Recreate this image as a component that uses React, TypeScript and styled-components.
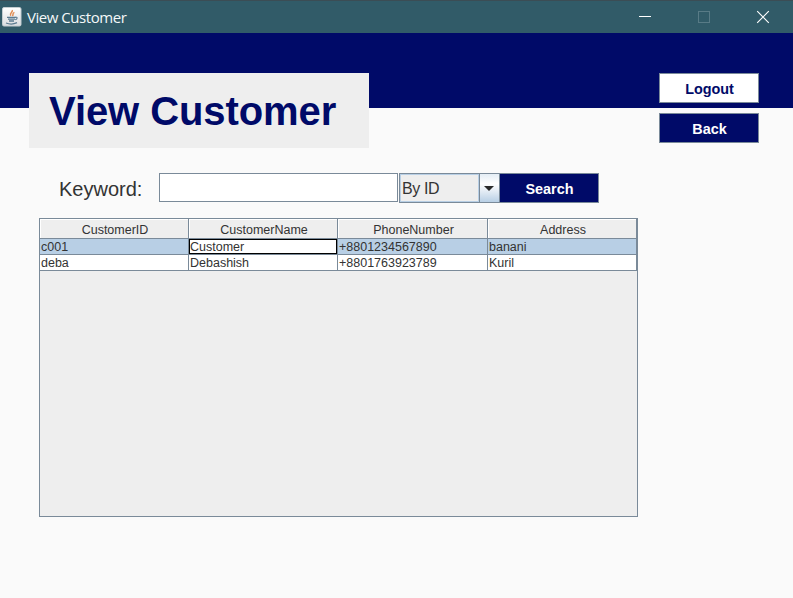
import React from "react";
import styled, { createGlobalStyle, css } from "styled-components";

const navy = "#000a68";
const line = "#7a8a99";

const GlobalStyle = createGlobalStyle`
  * { box-sizing: border-box; }
  body { margin: 0; background: #fafafa; overflow: hidden; }
`;

const Window = styled.div`
  width: 793px;
  height: 598px;
  display: flex;
  flex-direction: column;
  font-family: "Liberation Sans", Arial, sans-serif;
  color: #333;
`;

const TitleBar = styled.header`
  height: 33px;
  flex: none;
  display: flex;
  align-items: center;
  padding: 0 23px 1px 2px;
  background: #315b68;
  border-top: 1px solid #3b4d55;
  color: #f4f8f9;
`;

const WindowTitle = styled.span`
  flex: 1;
  margin-left: 5px;
  font: 15px/20px "Open Sans", "Noto Sans", sans-serif;
  letter-spacing: -0.46px;
`;

const WindowControls = styled.div`
  display: flex;
  gap: 45px;
`;

const Content = styled.main`
  flex: 1;
  padding: 40px 34px 0 29px;
  background: linear-gradient(${navy} 75px, #fafafa 75px);
`;

const Top = styled.div`
  display: flex;
  justify-content: space-between;
`;

const Heading = styled.h1`
  width: 340px;
  height: 75px;
  margin: 0;
  padding: 0 0 0 20px;
  background: #eee;
  color: ${navy};
  font-size: 40px;
  letter-spacing: -0.08px;
  line-height: 77px;
`;

const Actions = styled.div`
  display: flex;
  flex-direction: column;
  gap: 10px;
`;

const Button = styled.button<{ $light?: boolean }>`
  width: 100px;
  height: 30px;
  padding: 2px 0 0 1px;
  border: 1px solid ${line};
  background: ${(p) => (p.$light ? "#fff" : navy)};
  color: ${(p) => (p.$light ? navy : "#fff")};
  font: bold 14.4px/16px "Liberation Sans", Arial, sans-serif;
`;

const SearchBar = styled.form`
  display: flex;
  height: 30px;
  margin: 25px 0 0 30px;
`;

const Label = styled.label`
  width: 100px;
  font-size: 20px;
  line-height: 32px;
`;

const KeywordInput = styled.input`
  width: 239px;
  height: 29px;
  margin-right: 1px;
  border: 1px solid ${line};
  border-radius: 0;
  background: #fff;
  outline: 0;
`;

const Combo = styled.div`
  width: 101px;
  height: 30px;
  margin-right: -1px;
  display: flex;
  border: 1px solid ${line};
  background: #eee;
`;

const ComboValue = styled.span`
  flex: 1;
  padding-left: 1px;
  border: 1px solid #b8cfe5;
  font-size: 16px;
  letter-spacing: -0.4px;
  line-height: 27px;
`;

const ComboArrow = styled.span`
  width: 20px;
  display: flex;
  align-items: center;
  justify-content: center;
  padding: 1px 1px 0 0;
  border-left: 1px solid ${line};
  background: linear-gradient(#e4edf5, #fff 35%, #e5edf5 60%, #b8cfe5);
`;

const TablePane = styled.section`
  width: 599px;
  height: 299px;
  margin: 15px 0 0 10px;
  border: 1px solid ${line};
  background: #eee;
`;

const Row = styled.div<{ $header?: boolean; $selected?: boolean }>`
  display: grid;
  grid-template-columns: 149px 149px 150px 149px;
  grid-template-rows: ${(p) => (p.$header ? 20 : 16)}px;
  background: ${(p) => (p.$header ? "#eee" : p.$selected ? "#b8cfe5" : "#fff")};
`;

const HeaderCell = styled.div`
  padding-left: 2px;
  border-right: 1px solid ${line};
  border-bottom: 1px solid ${line};
  box-shadow: inset 1px 1px #fff;
  font-size: 12.5px;
  line-height: 22px;
  text-align: center;
`;

const Cell = styled.div<{ $focused?: boolean }>`
  padding-left: 1px;
  border-right: 1px solid ${line};
  border-bottom: 1px solid ${line};
  font-size: 12.5px;
  line-height: 16px;
  white-space: nowrap;
  ${(p) =>
    p.$focused &&
    css`
      padding: 0 0 0 1px;
      line-height: 17px;
      background: #fff;
      box-shadow: inset 0 0 0 1px #000;
    `}
`;

const columns = ["CustomerID", "CustomerName", "PhoneNumber", "Address"];
const customers = [
  ["c001", "Customer", "+8801234567890", "banani"],
  ["deba", "Debashish", "+8801763923789", "Kuril"],
];

const JavaIcon = () => (
  <svg width="20" height="20" viewBox="0 0 20 20" fill="none">
    <defs>
      <linearGradient id="tile" x2="0" y2="1">
        <stop stopColor="#fff" />
        <stop offset="1" stopColor="#d9dde0" />
      </linearGradient>
    </defs>
    <rect x=".5" y=".5" width="18.5" height="18.5" rx="1.5" fill="url(#tile)" stroke="#c3cdd1" />
    <path d="M10.2 3.2c1.2 2-3.4 2.8-1.4 5.6M12.4 5.4C9.6 6.7 12 7.4 10.4 9" stroke="#e08b50" strokeWidth="1.5" />
    <path d="M5 10.4h8.5M6 12.2h7M7 14h5M4 16c3 1.2 8 1.1 11-.3" stroke="#5b7b90" strokeWidth="1.3" />
    <path d="M13 10.4c3-.9 2.6 1.7.2 2.3" stroke="#5b7b90" strokeWidth="1.1" />
  </svg>
);

export default function App() {
  return (
    <>
      <GlobalStyle />
      <Window>
        <TitleBar>
          <JavaIcon />
          <WindowTitle>View Customer</WindowTitle>
          <WindowControls>
            <svg width="14" height="14" viewBox="0 0 14 14">
              <path d="M1 6.5h12" stroke="#fff" />
            </svg>
            <svg width="14" height="14" viewBox="0 0 14 14">
              <rect x="1.5" y="1.5" width="11" height="11" fill="none" stroke="#587b86" />
            </svg>
            <svg width="14" height="14" viewBox="0 0 14 14">
              <path d="M1.2 1.2l11.6 11.6M12.8 1.2L1.2 12.8" stroke="#fff" strokeWidth="1.15" />
            </svg>
          </WindowControls>
        </TitleBar>
        <Content>
          <Top>
            <Heading>View Customer</Heading>
            <Actions>
              <Button $light>Logout</Button>
              <Button>Back</Button>
            </Actions>
          </Top>
          <SearchBar onSubmit={(e) => e.preventDefault()}>
            <Label htmlFor="keyword">Keyword:</Label>
            <KeywordInput id="keyword" />
            <Combo>
              <ComboValue>By ID</ComboValue>
              <ComboArrow>
                <svg width="10" height="5" viewBox="0 0 10 5">
                  <path d="M0 0h10L5 5z" fill="#2b2b2b" />
                </svg>
              </ComboArrow>
            </Combo>
            <Button>Search</Button>
          </SearchBar>
          <TablePane>
            <Row $header>
              {columns.map((name) => (
                <HeaderCell key={name}>{name}</HeaderCell>
              ))}
            </Row>
            {customers.map((customer, r) => (
              <Row key={customer[0]} $selected={r === 0}>
                {customer.map((value, c) => (
                  <Cell key={value} $focused={r === 0 && c === 1}>
                    {value}
                  </Cell>
                ))}
              </Row>
            ))}
          </TablePane>
        </Content>
      </Window>
    </>
  );
}
